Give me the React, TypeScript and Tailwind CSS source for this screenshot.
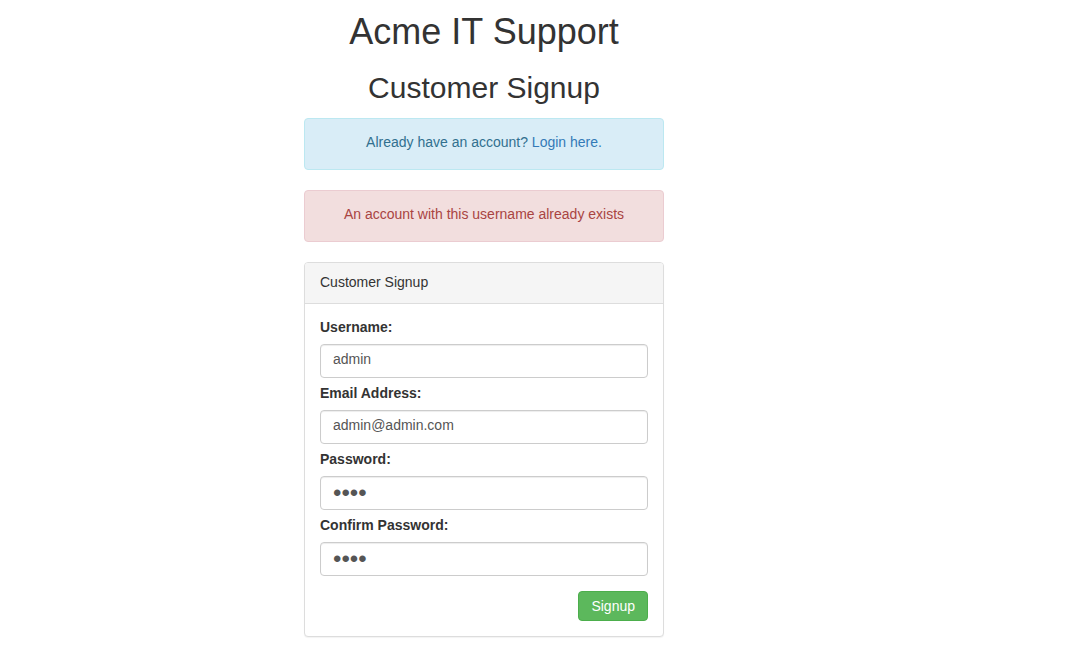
import { useState } from "react";

const FONT = { fontFamily: '"Liberation Sans", Arial, Helvetica, sans-serif' };

const FIELDS = [
  { id: "username", label: "Username:", type: "text", value: "admin" },
  { id: "email", label: "Email Address:", type: "email", value: "admin@admin.com" },
  { id: "password", label: "Password:", type: "password", value: "aaaa" },
  { id: "confirm", label: "Confirm Password:", type: "password", value: "aaaa" },
];

export default function App() {
  const [values, setValues] = useState<Record<string, string>>(
    Object.fromEntries(FIELDS.map((f) => [f.id, f.value]))
  );

  return (
    <div className="min-h-screen bg-white text-[#333] text-[14px] leading-[20px]" style={FONT}>
      <div className="ml-[304px] w-[360px] pt-[12px]">
        <h1 className="text-center text-[36px] leading-[1.1] font-normal">Acme IT Support</h1>
        <h2 className="mt-[19px] text-center text-[30px] leading-[1.1] font-normal">Customer Signup</h2>

        <div className="mt-[14px] rounded-[4px] border border-[#bce8f1] bg-[#d9edf7] px-[15px] pt-[13px] pb-[17px] text-center text-[#31708f]">
          Already have an account?{" "}
          <a href="#" className="text-[#337ab7]">
            Login here.
          </a>
        </div>

        <div className="mt-[20px] rounded-[4px] border border-[#ebccd1] bg-[#f2dede] px-[15px] pt-[13px] pb-[17px] text-center text-[#a94442]">
          An account with this username already exists
        </div>

        <div className="mt-[20px] rounded-[4px] border border-[#ddd] bg-white shadow-[0_1px_1px_rgba(0,0,0,0.05)]">
          <div className="rounded-t-[3px] border-b border-[#ddd] bg-[#f5f5f5] px-[15px] pt-[9px] pb-[11px]">
            Customer Signup
          </div>
          <form className="flex flex-col p-[15px]" onSubmit={(e) => e.preventDefault()}>
            {FIELDS.map((f, i) => (
              <div key={f.id} className={i > 0 ? "mt-[7px] flex flex-col" : "flex flex-col"}>
                <label htmlFor={f.id} className="mb-[9px] font-bold leading-[16px]">
                  {f.label}
                </label>
                <input
                  id={f.id}
                  type={f.type}
                  value={values[f.id]}
                  onChange={(e) => setValues({ ...values, [f.id]: e.target.value })}
                  className={
                    f.type === "password"
                      ? "h-[34px] w-full rounded-[4px] border border-[#ccc] bg-white px-[12px] py-[6px] text-[24px] leading-[20px] text-[#555] shadow-[inset_0_1px_1px_rgba(0,0,0,0.075)] outline-none"
                      : "h-[34px] w-full rounded-[4px] border border-[#ccc] bg-white px-[12px] pt-[4px] pb-[8px] text-[14px] text-[#555] shadow-[inset_0_1px_1px_rgba(0,0,0,0.075)] outline-none"
                  }
                  style={FONT}
                />
              </div>
            ))}
            <div className="mt-[15px] flex justify-end">
              <button
                type="submit"
                className="h-[30px] rounded-[4px] border border-[#4cae4c] bg-[#5cb85c] px-[12px] text-[14px] text-white"
                style={FONT}
              >
                Signup
              </button>
            </div>
          </form>
        </div>
      </div>
    </div>
  );
}
